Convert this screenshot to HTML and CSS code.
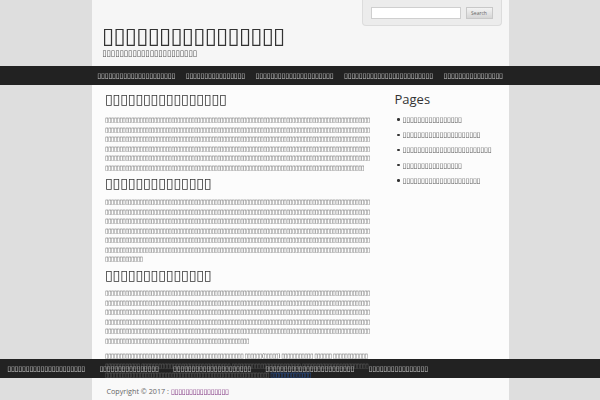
FILE: index.html
```html
<!DOCTYPE html>
<html>
<head>
<meta charset="utf-8">
<title>▯▯▯▯▯▯▯▯▯▯▯▯▯▯▯▯</title>
<link rel="stylesheet" href="styles.css">
</head>
<body>
<div class="wrap header">
  <div class="brand">
    <div class="site-title">▯▯▯▯▯▯▯▯▯▯▯▯▯▯▯▯</div>
    <div class="site-desc">▯▯▯▯▯▯▯▯▯▯▯▯▯▯▯▯▯▯▯▯▯▯</div>
  </div>
  <form class="search">
    <input class="search-input" type="text">
    <button class="search-btn" type="button">Search</button>
  </form>
</div>
<nav class="nav">
  <ul class="nav-list">
    <li>▯▯▯▯▯▯▯▯▯▯▯▯▯▯▯▯▯▯▯▯▯</li>
    <li>▯▯▯▯▯▯▯▯▯▯▯▯▯▯▯▯</li>
    <li>▯▯▯▯▯▯▯▯▯▯▯▯▯▯▯▯▯▯▯▯▯</li>
    <li>▯▯▯▯▯▯▯▯▯▯▯▯▯▯▯▯▯▯▯▯▯▯▯▯</li>
    <li>▯▯▯▯▯▯▯▯▯▯▯▯▯▯▯▯</li>
  </ul>
</nav>
<div class="wrap content">
  <main class="main">
    <h1 class="post-title">▯▯▯▯▯▯▯▯▯▯▯▯▯▯▯▯</h1>
    <p>▯▯▯▯▯▯▯▯▯▯▯▯▯▯▯▯▯▯▯▯▯▯▯▯▯▯▯▯▯▯▯▯▯▯▯▯▯▯▯▯▯▯▯▯▯▯▯▯▯▯▯▯▯▯▯▯▯▯▯▯▯▯▯▯▯▯▯▯▯▯▯▯▯▯▯▯▯▯▯▯▯▯▯▯▯▯▯▯▯▯▯▯▯▯▯▯▯▯▯▯▯▯▯▯▯▯▯▯▯▯▯▯▯▯▯▯▯▯▯▯▯▯▯▯▯▯▯▯▯▯▯▯▯▯▯▯▯▯▯▯▯▯▯▯▯▯▯▯▯▯▯▯▯▯▯▯▯▯▯▯▯▯▯▯▯▯▯▯▯▯▯▯▯▯▯▯▯▯▯▯▯▯▯▯▯▯▯▯▯▯▯▯▯▯▯▯▯▯▯▯▯▯▯▯▯▯▯▯▯▯▯▯▯▯▯▯▯▯▯▯▯▯▯▯▯▯▯▯▯▯▯▯▯▯▯▯▯▯▯▯▯▯▯▯▯▯▯▯▯▯▯▯▯▯▯▯▯▯▯▯▯▯▯▯▯▯▯▯▯▯▯▯▯▯▯▯▯▯▯▯▯▯▯▯▯▯▯▯▯▯▯▯▯▯▯▯▯▯▯▯▯▯▯▯▯▯▯▯▯▯▯▯▯▯▯▯▯▯▯▯▯▯▯▯▯▯▯▯▯▯▯▯▯▯▯▯▯▯▯▯▯▯▯▯▯▯▯▯▯▯▯▯▯▯▯▯▯▯▯▯▯▯▯▯▯▯▯▯▯▯▯▯▯▯▯▯▯▯▯▯▯▯▯▯▯▯▯▯▯▯▯▯▯▯▯▯▯▯▯▯▯▯▯▯▯▯▯▯▯▯▯▯▯▯▯▯▯▯▯▯▯▯▯▯▯▯▯▯▯▯▯▯▯▯▯▯▯▯▯▯▯▯▯▯▯▯▯▯▯▯▯▯▯▯▯▯▯▯▯▯▯▯▯▯▯▯▯▯▯▯▯▯▯▯▯▯▯▯▯▯▯▯▯▯▯▯▯▯▯▯▯▯▯▯▯▯▯▯▯▯▯▯▯▯▯▯▯▯▯▯▯▯▯▯▯▯▯▯▯▯▯▯▯▯▯▯▯▯▯▯▯▯▯▯▯▯▯▯▯▯▯▯▯▯▯▯▯▯▯▯</p>
    <h2 class="sec-title">▯▯▯▯▯▯▯▯▯▯▯▯▯▯</h2>
    <p>▯▯▯▯▯▯▯▯▯▯▯▯▯▯▯▯▯▯▯▯▯▯▯▯▯▯▯▯▯▯▯▯▯▯▯▯▯▯▯▯▯▯▯▯▯▯▯▯▯▯▯▯▯▯▯▯▯▯▯▯▯▯▯▯▯▯▯▯▯▯▯▯▯▯▯▯▯▯▯▯▯▯▯▯▯▯▯▯▯▯▯▯▯▯▯▯▯▯▯▯▯▯▯▯▯▯▯▯▯▯▯▯▯▯▯▯▯▯▯▯▯▯▯▯▯▯▯▯▯▯▯▯▯▯▯▯▯▯▯▯▯▯▯▯▯▯▯▯▯▯▯▯▯▯▯▯▯▯▯▯▯▯▯▯▯▯▯▯▯▯▯▯▯▯▯▯▯▯▯▯▯▯▯▯▯▯▯▯▯▯▯▯▯▯▯▯▯▯▯▯▯▯▯▯▯▯▯▯▯▯▯▯▯▯▯▯▯▯▯▯▯▯▯▯▯▯▯▯▯▯▯▯▯▯▯▯▯▯▯▯▯▯▯▯▯▯▯▯▯▯▯▯▯▯▯▯▯▯▯▯▯▯▯▯▯▯▯▯▯▯▯▯▯▯▯▯▯▯▯▯▯▯▯▯▯▯▯▯▯▯▯▯▯▯▯▯▯▯▯▯▯▯▯▯▯▯▯▯▯▯▯▯▯▯▯▯▯▯▯▯▯▯▯▯▯▯▯▯▯▯▯▯▯▯▯▯▯▯▯▯▯▯▯▯▯▯▯▯▯▯▯▯▯▯▯▯▯▯▯▯▯▯▯▯▯▯▯▯▯▯▯▯▯▯▯▯▯▯▯▯▯▯▯▯▯▯▯▯▯▯▯▯▯▯▯▯▯▯▯▯▯▯▯▯▯▯▯▯▯▯▯▯▯▯▯▯▯▯▯▯▯▯▯▯▯▯▯▯▯▯▯▯▯▯▯▯▯▯▯▯▯▯▯▯▯▯▯▯▯▯▯▯▯▯▯▯▯▯▯▯▯▯▯▯▯▯▯▯▯▯▯▯▯▯▯▯▯▯▯▯▯▯▯▯▯▯▯▯▯▯▯▯▯▯▯▯▯▯▯▯▯▯▯▯▯▯▯▯▯▯▯▯▯▯▯▯▯▯▯▯▯▯▯▯▯▯▯▯▯▯▯▯▯▯▯▯▯▯▯▯▯▯▯▯▯▯▯▯▯▯▯▯▯▯▯▯▯▯▯▯▯▯▯▯▯</p>
    <h2 class="sec-title">▯▯▯▯▯▯▯▯▯▯▯▯▯▯</h2>
    <p>▯▯▯▯▯▯▯▯▯▯▯▯▯▯▯▯▯▯▯▯▯▯▯▯▯▯▯▯▯▯▯▯▯▯▯▯▯▯▯▯▯▯▯▯▯▯▯▯▯▯▯▯▯▯▯▯▯▯▯▯▯▯▯▯▯▯▯▯▯▯▯▯▯▯▯▯▯▯▯▯▯▯▯▯▯▯▯▯▯▯▯▯▯▯▯▯▯▯▯▯▯▯▯▯▯▯▯▯▯▯▯▯▯▯▯▯▯▯▯▯▯▯▯▯▯▯▯▯▯▯▯▯▯▯▯▯▯▯▯▯▯▯▯▯▯▯▯▯▯▯▯▯▯▯▯▯▯▯▯▯▯▯▯▯▯▯▯▯▯▯▯▯▯▯▯▯▯▯▯▯▯▯▯▯▯▯▯▯▯▯▯▯▯▯▯▯▯▯▯▯▯▯▯▯▯▯▯▯▯▯▯▯▯▯▯▯▯▯▯▯▯▯▯▯▯▯▯▯▯▯▯▯▯▯▯▯▯▯▯▯▯▯▯▯▯▯▯▯▯▯▯▯▯▯▯▯▯▯▯▯▯▯▯▯▯▯▯▯▯▯▯▯▯▯▯▯▯▯▯▯▯▯▯▯▯▯▯▯▯▯▯▯▯▯▯▯▯▯▯▯▯▯▯▯▯▯▯▯▯▯▯▯▯▯▯▯▯▯▯▯▯▯▯▯▯▯▯▯▯▯▯▯▯▯▯▯▯▯▯▯▯▯▯▯▯▯▯▯▯▯▯▯▯▯▯▯▯▯▯▯▯▯▯▯▯▯▯▯▯▯▯▯▯▯▯▯▯▯▯▯▯▯▯▯▯▯▯▯▯▯▯▯▯▯▯▯▯▯▯▯▯▯▯▯▯▯▯▯▯▯▯▯▯▯▯▯▯▯▯▯▯▯▯▯▯▯▯▯▯▯▯▯▯▯▯▯▯▯▯▯▯▯▯▯▯▯▯▯▯▯▯▯▯▯▯▯▯▯▯▯▯▯▯▯▯▯▯▯▯▯▯▯▯▯▯▯▯▯▯▯▯▯▯▯▯▯▯▯▯▯▯▯▯▯▯▯▯▯▯▯▯▯▯▯▯▯▯▯▯▯</p>
    <p>▯▯▯▯▯▯▯▯▯▯▯▯▯▯▯▯▯▯▯▯▯▯▯▯▯▯▯▯▯▯▯▯▯▯▯▯▯▯▯▯▯▯▯▯▯▯▯▯ ▯▯▯▯▯▯(▯▯▯▯▯) ▯▯▯▯▯▯▯▯▯▯▯ ▯▯▯▯▯▯ ▯▯▯▯▯▯▯▯▯▯▯▯▯▯▯▯▯▯▯▯▯▯▯▯ ▯▯▯▯▯▯▯▯▯▯▯▯▯▯▯▯▯▯▯▯▯▯▯▯▯▯▯▯▯▯▯ ▯▯▯▯▯▯▯▯▯▯▯▯▯▯▯▯▯▯▯▯▯▯▯▯ ▯▯▯▯▯▯▯▯▯▯▯▯▯▯▯▯▯▯▯▯▯▯▯▯▯▯▯▯▯▯▯▯▯▯▯▯▯▯▯▯▯▯▯▯▯▯▯▯▯▯▯▯▯▯▯▯▯▯▯▯▯▯▯▯▯▯▯▯▯▯▯▯▯▯▯▯▯▯▯▯ <a class="more" href="#">▯▯▯▯▯▯▯▯▯▯▯▯▯▯</a></p>
  </main>
  <aside class="sidebar">
    <h3 class="widget-title">Pages</h3>
    <ul class="pages">
      <li>▯▯▯▯▯▯▯▯▯▯▯▯▯▯▯▯</li>
      <li>▯▯▯▯▯▯▯▯▯▯▯▯▯▯▯▯▯▯▯▯▯</li>
      <li>▯▯▯▯▯▯▯▯▯▯▯▯▯▯▯▯▯▯▯▯▯▯▯▯</li>
      <li>▯▯▯▯▯▯▯▯▯▯▯▯▯▯▯▯</li>
      <li>▯▯▯▯▯▯▯▯▯▯▯▯▯▯▯▯▯▯▯▯▯</li>
    </ul>
  </aside>
</div>
<nav class="footer-nav">
  <ul class="fnav-list">
    <li>▯▯▯▯▯▯▯▯▯▯▯▯▯▯▯▯▯▯▯▯▯</li>
    <li>▯▯▯▯▯▯▯▯▯▯▯▯▯▯▯▯</li>
    <li>▯▯▯▯▯▯▯▯▯▯▯▯▯▯▯▯▯▯▯▯▯</li>
    <li>▯▯▯▯▯▯▯▯▯▯▯▯▯▯▯▯▯▯▯▯▯▯▯▯</li>
    <li>▯▯▯▯▯▯▯▯▯▯▯▯▯▯▯▯</li>
  </ul>
</nav>
<div class="wrap copyright">
  Copyright © 2017 : <a class="home" href="#">▯▯▯▯▯▯▯▯▯▯▯▯▯▯▯▯</a>
</div>
</body>
</html>
```

FILE: styles.css
```css
html, body {
  margin: 0;
  padding: 0;
  background: #dedede;
  font-family: "Open Sans", sans-serif;
  color: #555;
}
.wrap {
  width: 417px;
  margin: 0 auto;
  box-sizing: border-box;
}
.header {
  height: 66px;
  background: #f6f6f6;
  display: flex;
  justify-content: space-between;
  align-items: flex-start;
}
.brand {
  padding: 24px 0 0 10px;
  font-family: "DejaVu Sans", sans-serif;
  will-change: transform;
}
.site-title {
  font-size: 22px;
  line-height: 24px;
  letter-spacing: -0.7px;
  color: #333;
}
.site-desc {
  font-size: 8.4px;
  line-height: 10px;
  letter-spacing: -0.3px;
  color: #555;
}
.search {
  margin: 0 7px 0 0;
  width: 140px;
  height: 26px;
  box-sizing: border-box;
  background: #ececec;
  border: 1px solid #dcdcdc;
  border-top: 0;
  border-radius: 0 0 4px 4px;
  display: flex;
  align-items: center;
  gap: 5px;
  padding: 0 8px;
}
.search-input {
  width: 90px;
  height: 12px;
  box-sizing: border-box;
  border: 1px solid #cfcfcf;
  background: #fff;
  margin: 0;
  padding: 0;
}
.search-btn {
  width: 28px;
  height: 12px;
  box-sizing: border-box;
  border: 1px solid #c8c8c8;
  background: linear-gradient(#f3f3f3, #d6d6d6);
  color: #666;
  font-family: "Open Sans", sans-serif;
  font-size: 5px;
  margin: 0;
  padding: 0;
}
.nav {
  background: #222;
  height: 19px;
}
.nav-list, .fnav-list {
  list-style: none;
  margin: 0;
  padding: 0;
  display: flex;
  height: 19px;
  align-items: center;
  font-family: "DejaVu Sans", sans-serif;
  font-size: 7.2px;
  letter-spacing: -0.25px;
  color: #cfcfcf;
  will-change: transform;
}
.nav-list {
  width: 417px;
  margin: 0 auto;
}
.nav-list li {
  padding: 0 5.3px;
  white-space: nowrap;
}
.fnav-list li {
  padding: 0 7.2px;
  white-space: nowrap;
}
.content {
  background: #fcfcfc;
  display: flex;
  gap: 25px;
  padding: 5px 0 0 13px;
  height: 274px;
}
.main {
  width: 265px;
  font-family: "DejaVu Sans", sans-serif;
}
.post-title, .sec-title {
  font-size: 14px;
  line-height: 14px;
  letter-spacing: -0.1px;
  font-weight: normal;
  color: #333;
  margin: 0;
  will-change: transform;
}
.post-title {
  margin: 2px 0 9.5px;
}
.sec-title {
  margin: -2px 0 7.5px;
}
.main p {
  font-size: 6.5px;
  line-height: 9.5px;
  letter-spacing: -0.7px;
  word-break: break-all;
  color: #666;
  margin: 0 0 5.5px;
  will-change: transform;
}
.more {
  color: #2a5db0;
  text-decoration: none;
}
.sidebar {
  width: 108px;
}
.widget-title {
  font-size: 13px;
  line-height: 18px;
  font-weight: normal;
  color: #333;
  margin: 0 0 4px;
}
.pages {
  list-style: none;
  margin: 0;
  padding: 0 0 0 2px;
  font-family: "DejaVu Sans", sans-serif;
  will-change: transform;
}
.pages li {
  display: flex;
  align-items: center;
  font-size: 7.2px;
  letter-spacing: -0.25px;
  line-height: 15.2px;
  color: #555;
}
.pages li::before {
  content: "";
  width: 2.5px;
  height: 2.5px;
  border-radius: 50%;
  background: #333;
  margin-right: 3px;
  flex: none;
}
.footer-nav {
  background: #222;
  height: 19px;
}
.copyright {
  background: #f9f9f9;
  padding: 8px 0 0 15px;
  height: 22px;
  font-size: 7.2px;
  color: #666;
}
.home {
  display: inline-block;
  font-family: "DejaVu Sans", sans-serif;
  font-size: 7.2px;
  letter-spacing: -0.35px;
  color: #7a2a7a;
  text-decoration: none;
  will-change: transform;
}
```
